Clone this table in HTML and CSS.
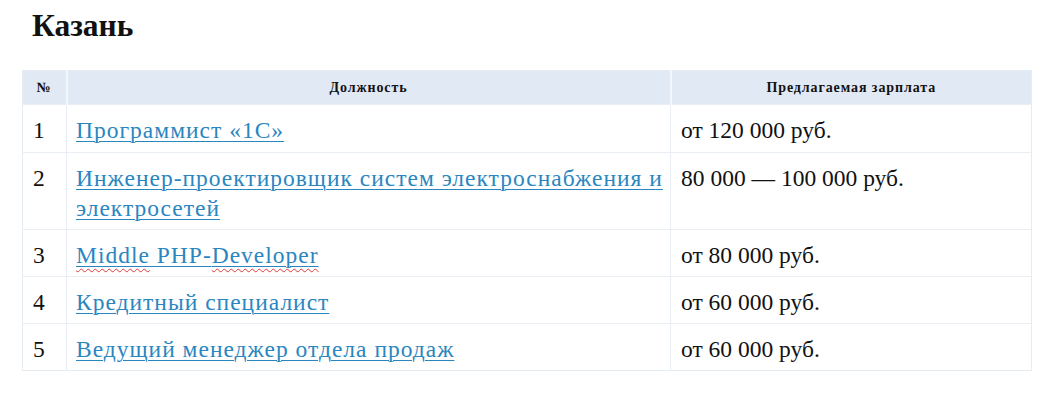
FILE: index.html
```html
<!DOCTYPE html>
<html lang="ru">
<head>
<meta charset="utf-8">
<link rel="stylesheet" href="styles.css">
</head>
<body>
<h2 class="city">Казань</h2>
<table class="jobs">
  <thead>
    <tr><th class="c-num">№</th><th class="c-pos">Должность</th><th class="c-sal">Предлагаемая зарплата</th></tr>
  </thead>
  <tbody>
    <tr class="first"><td>1</td><td><a href="#">Программист «1С»</a></td><td>от 120 000 руб.</td></tr>
    <tr><td>2</td><td><a href="#">Инженер-проектировщик систем электроснабжения и электросетей</a></td><td>80 000 — 100 000 руб.</td></tr>
    <tr><td>3</td><td><a href="#"><span class="spell">Middle</span> PHP-<span class="spell">Developer</span></a></td><td>от 80 000 руб.</td></tr>
    <tr><td>4</td><td><a href="#">Кредитный специалист</a></td><td>от 60 000 руб.</td></tr>
    <tr><td>5</td><td><a href="#">Ведущий менеджер отдела продаж</a></td><td>от 60 000 руб.</td></tr>
  </tbody>
</table>
</body>
</html>
```
FILE: styles.css
```css
html, body { margin: 0; padding: 0; background: #fff; }
body {
  font-family: "Liberation Serif", "Times New Roman", serif;
  color: #111;
  padding: 0 28px 0 22px;
}
.city {
  margin: 0;
  padding: 8px 0 0 10px;
  font-size: 31.5px;
  font-weight: bold;
  line-height: 36px;
  height: 70px;
  box-sizing: border-box;
}
.jobs {
  width: 1010px;
  border-collapse: collapse;
  table-layout: fixed;
  border: 1px solid #e6edf2;
}
.jobs th, .jobs td { box-sizing: border-box; }
.jobs th {
  background: #e1e9f4;
  font-size: 14px;
  letter-spacing: 0.9px;
  font-weight: bold;
  height: 34px;
  padding: 0 4px;
  text-align: center;
  border-right: 2px solid #f3f6fa;
}
.jobs th:last-child { border-right: none; }
.c-num { width: 44px; }
.c-sal { width: 361px; }
.jobs td {
  font-size: 23.5px;
  line-height: 30px;
  padding: 10px 2px 6px 9px;
  vertical-align: top;
  border-top: 1px solid #e8eef3;
  border-right: 1px solid #e8eef3;
}
.jobs .first td { padding-bottom: 7px; }
.jobs td:first-child { padding-left: 10px; }
.jobs td:last-child { border-right: none; padding-left: 10px; }
.jobs a {
  color: #2a86c0;
  letter-spacing: 1px;
  text-decoration: underline;
  text-underline-offset: 3px;
  text-decoration-thickness: 1px;
}
.jobs .spell {
  text-decoration: underline wavy #e03a3a;
  text-decoration-thickness: 1px;
  text-underline-offset: 5px;
}
```
